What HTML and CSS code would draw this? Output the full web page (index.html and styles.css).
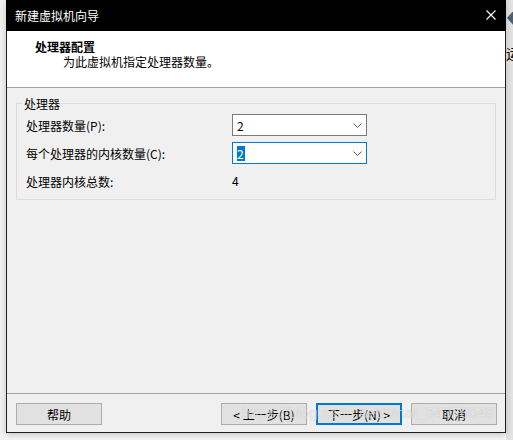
FILE: index.html
```html
<!DOCTYPE html>
<html lang="zh-CN">
<head>
<meta charset="utf-8">
<title>新建虚拟机向导</title>
<link rel="stylesheet" href="styles.css">
</head>
<body>
<div class="desk">
  <div class="gutter"></div>
  <div class="window">
    <div class="titlebar">
      <span class="title-text">新建虚拟机向导</span>
      <svg class="close" width="10" height="10" viewBox="0 0 10 10"><path d="M0.5 0.5 L9.5 9.5 M9.5 0.5 L0.5 9.5" stroke="#fff" stroke-width="1.1" fill="none"/></svg>
    </div>
    <div class="header">
      <div class="h-title">处理器配置</div>
      <div class="h-sub">为此虚拟机指定处理器数量。</div>
    </div>
    <div class="content">
      <div class="group">
        <span class="legend">处理器</span>
        <div class="grid">
          <div class="label">处理器数量(P):</div>
          <div class="combo"><span class="val">2</span><svg class="chev" width="9" height="5" viewBox="0 0 9 5"><path d="M0.5 0.5 L4.5 4.5 L8.5 0.5" stroke="#606060" stroke-width="1" fill="none"/></svg></div>
          <div class="label">每个处理器的内核数量(C):</div>
          <div class="combo focus"><span class="val sel">2</span><svg class="chev" width="9" height="5" viewBox="0 0 9 5"><path d="M0.5 0.5 L4.5 4.5 L8.5 0.5" stroke="#606060" stroke-width="1" fill="none"/></svg></div>
          <div class="label">处理器内核总数:</div>
          <div class="plain">4</div>
        </div>
      </div>
    </div>
    <div class="footer">
      <button class="btn">帮助</button>
      <div class="spacer"></div>
      <button class="btn">&lt; 上一步(B)</button>
      <button class="btn default">下一步(N) &gt;</button>
      <button class="btn">取消</button>
    </div>
    <div class="watermark">https://blog.csdn.net/sinat_34370048</div>
  </div>
  <div class="side">
    <svg class="arrow" width="7" height="16" viewBox="0 0 7 16"><path d="M7 0 L0 8 L7 16 Z" fill="#4f5f6e"/></svg>
    <span class="side-text">运</span>
  </div>
</div>
</body>
</html>
```
FILE: styles.css
```css
html, body {
  margin: 0;
  padding: 0;
}
body {
  width: 513px;
  height: 440px;
  overflow: hidden;
  background: #f4f4f4;
  font-family: "Noto Sans CJK SC", "Liberation Sans", sans-serif;
  font-size: 12px;
  color: #000;
}
.desk {
  display: flex;
  height: 440px;
  align-items: flex-start;
}
.gutter {
  width: 6px;
  height: 433px;
  background: #f0f0f0;
}
.window {
  position: relative;
  width: 498px;
  height: 432px;
  border: 1px solid #1e1e1e;
  border-top: none;
  background: #f0f0f0;
  display: flex;
  flex-direction: column;
  box-shadow: 0 2px 6px rgba(0,0,0,0.18);
}
.titlebar {
  height: 31px;
  background: #000;
  color: #fff;
  display: flex;
  align-items: center;
  padding: 0 10px 0 9px;
  margin: 0 -1px;
}
.title-text {
  flex: 1;
  line-height: 15px;
  padding-bottom: 1px;
}
.close {
  display: block;
  margin-bottom: 1px;
}
.header {
  background: #fff;
  border-bottom: 1px solid #a0a0a0;
  padding: 8px 0 0 28px;
  box-sizing: border-box;
  height: 57px;
  line-height: 15px;
}
.h-title {
  font-weight: bold;
}
.h-sub {
  padding-left: 28px;
}
.content {
  flex: 1;
  padding: 15px 9px 0 9px;
}
.group {
  position: relative;
  border: 1px solid #dcdcdc;
  padding: 10px 9px 7px 9px;
}
.legend {
  position: absolute;
  left: 6px;
  top: -8px;
  padding: 0 1px;
  background: #f0f0f0;
  line-height: 15px;
}
.grid {
  display: grid;
  grid-template-columns: 206px 135px;
  grid-auto-rows: 22px;
  row-gap: 6px;
  align-items: center;
}
.label, .plain {
  line-height: 15px;
}
.plain {
  padding-bottom: 2px;
}
.combo {
  height: 22px;
  box-sizing: border-box;
  border: 1px solid #7a7a7a;
  background: #fff;
  display: flex;
  align-items: center;
  padding: 0 4px;
}
.combo.focus {
  border-color: #0078d7;
}
.val {
  flex: 1;
  line-height: 15px;
}
.val.sel {
  flex: none;
  background: #0078d7;
  color: #fff;
  padding: 0 1px 0 0;
}
.combo.focus .chev {
  margin-left: auto;
}
.chev {
  display: block;
}
.footer {
  height: 39px;
  box-sizing: border-box;
  border-top: 1px solid #a0a0a0;
  display: flex;
  align-items: flex-start;
  padding: 9px 8px 0 9px;
  gap: 9px;
}
.spacer {
  flex: 1;
}
.btn {
  width: 86px;
  height: 22px;
  margin: 0;
  padding: 0;
  font-family: "Noto Sans CJK SC", "Liberation Sans", sans-serif;
  font-size: 12px;
  color: #000;
  background: #e1e1e1;
  border: 1px solid #adadad;
  line-height: 15px;
}
.btn.default {
  border-color: #0078d7;
  box-shadow: inset 0 0 0 1px #0078d7;
}
.watermark {
  position: absolute;
  left: 235px;
  top: 404px;
  font-family: "Liberation Sans", sans-serif;
  font-size: 15px;
  letter-spacing: 0.2px;
  color: rgba(255,255,255,0.6);
  text-shadow: 0 0 1px rgba(0,0,0,0.2);
  white-space: nowrap;
  pointer-events: none;
}
.side {
  width: 7px;
  height: 440px;
  background: #e2e2e2;
  overflow: hidden;
  display: flex;
  flex-direction: column;
  padding-top: 10px;
  box-sizing: border-box;
}
.arrow {
  display: block;
  margin-left: 1px;
}
.side-text {
  margin-top: 19px;
  font-size: 14px;
  line-height: 16px;
  white-space: nowrap;
}
```
